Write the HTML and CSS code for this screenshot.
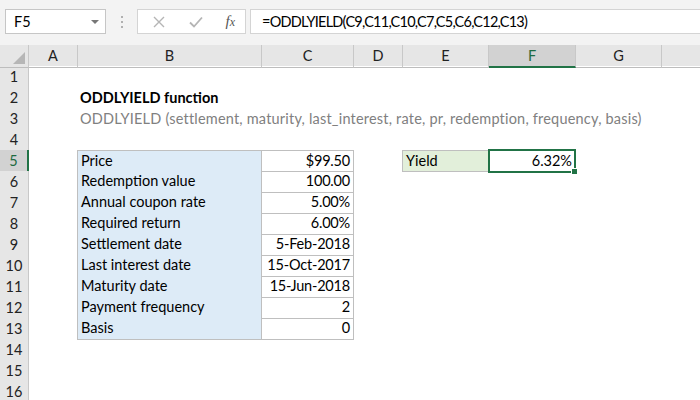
FILE: index.html
```html
<!DOCTYPE html>
<html>
<head>
<meta charset="utf-8">
<link rel="stylesheet" href="styles.css">
</head>
<body>
<div class="app">
  <div class="topbar">
    <div class="namebox"><span>F5</span><span class="caret"></span></div>
    <div class="dots"><i></i><i></i><i></i></div>
    <div class="btns">
      <svg class="ic" width="14" height="14" viewBox="0 0 14 14"><path d="M2 2L12 12M12 2L2 12" stroke="#b5b5b5" stroke-width="1.4" fill="none"/></svg>
      <svg class="ic" width="16" height="14" viewBox="0 0 16 14"><path d="M2 7.5L6 11.5L14 2.5" stroke="#b5b5b5" stroke-width="1.8" fill="none"/></svg>
      <span class="fx"><i>f</i><i class="x">x</i></span>
    </div>
    <div class="formula">=ODDLYIELD(C9,C11,C10,C7,C5,C6,C12,C13)</div>
  </div>
  <div class="sheet">
    <div class="row hdr">
      <div class="corner"><span class="tri"></span></div>
      <div class="ch">A</div><div class="ch">B</div><div class="ch">C</div><div class="ch">D</div>
      <div class="ch">E</div><div class="ch sel">F</div><div class="ch">G</div><div class="ch last"></div>
    </div>
    <div class="row"><div class="rh">1</div></div>
    <div class="row"><div class="rh">2</div><div class="c-b title">ODDLYIELD function</div></div>
    <div class="row"><div class="rh">3</div><div class="c-b syntax">ODDLYIELD (settlement, maturity, last_interest, rate, pr, redemption, frequency, basis)</div></div>
    <div class="row"><div class="rh">4</div></div>
    <div class="row"><div class="rh sel">5</div><div class="c-b lbl top">Price</div><div class="c-c val top">$99.50</div><div class="c-e yl">Yield</div><div class="c-f res">6.32%<span class="handle"></span></div></div>
    <div class="row"><div class="rh">6</div><div class="c-b lbl">Redemption value</div><div class="c-c val">100.00</div></div>
    <div class="row"><div class="rh">7</div><div class="c-b lbl">Annual coupon rate</div><div class="c-c val">5.00%</div></div>
    <div class="row"><div class="rh">8</div><div class="c-b lbl">Required return</div><div class="c-c val">6.00%</div></div>
    <div class="row"><div class="rh">9</div><div class="c-b lbl">Settlement date</div><div class="c-c val">5-Feb-2018</div></div>
    <div class="row"><div class="rh">10</div><div class="c-b lbl">Last interest date</div><div class="c-c val">15-Oct-2017</div></div>
    <div class="row"><div class="rh">11</div><div class="c-b lbl">Maturity date</div><div class="c-c val">15-Jun-2018</div></div>
    <div class="row"><div class="rh">12</div><div class="c-b lbl">Payment frequency</div><div class="c-c val">2</div></div>
    <div class="row"><div class="rh">13</div><div class="c-b lbl">Basis</div><div class="c-c val">0</div></div>
    <div class="row"><div class="rh">14</div></div>
    <div class="row"><div class="rh">15</div></div>
    <div class="row"><div class="rh">16</div></div>
  </div>
</div>
</body>
</html>
```
FILE: styles.css
```css
html, body { margin: 0; padding: 0; }
body { width: 700px; height: 400px; overflow: hidden; background: #fff;
  font-family: Lato, "Open Sans", sans-serif; font-size: 14.5px; color: #000; }
.app { width: 700px; height: 400px; overflow: hidden; }
.topbar { height: 45px; background: #f3f3f3; display: flex; align-items: flex-start;
  padding: 9px 0 0 5px; box-sizing: border-box; }
.namebox { width: 101px; height: 25px; box-sizing: border-box; background: #fff;
  border: 1px solid #c6c6c6; display: flex; align-items: center; justify-content: space-between;
  padding: 0 6px 0 8px; font-size: 14.5px; }
.caret { width: 0; height: 0; border-left: 4px solid transparent; border-right: 4px solid transparent;
  border-top: 4px solid #777; }
.dots { width: 31px; height: 25px; display: flex; flex-direction: column; align-items: center;
  justify-content: center; gap: 3px; }
.dots i { width: 2px; height: 2px; background: #b0b0b0; display: block; }
.btns { width: 109px; height: 25px; box-sizing: border-box; background: #fff; border: 1px solid #d4d4d4;
  display: flex; align-items: center; justify-content: space-between; padding: 0 10px 0 14px; }
.fx { font-family: "Liberation Serif", serif; font-style: italic; color: #555; font-size: 15px; }
.fx .x { font-size: 12px; }
.formula { margin-left: 4px; flex: 1; height: 25px; box-sizing: border-box; background: #fff;
  border: 1px solid #d4d4d4; border-right: none; padding-left: 11px; line-height: 23px; font-size: 14.5px;
  letter-spacing: -0.75px; }
.row { display: grid; grid-template-columns: 29px 49px 184px 92px 49px 86px 87px 86px 38px;
  height: 21px; }
.hdr { height: 21px; background: #e6e6e6; }
.corner { border-right: 1px solid #c8c8c8; border-bottom: 1px solid #bdbdbd; position: relative; }
.tri { position: absolute; right: 3px; bottom: 3px; width: 0; height: 0;
  border-left: 12px solid transparent; border-bottom: 12px solid #b6b6b6; }
.ch { border-right: 1px solid #c8c8c8; border-bottom: 1px solid #bdbdbd; text-align: center;
  line-height: 21px; font-size: 14.5px; color: #222; box-sizing: border-box; }
.ch.sel { background: #d2d2d2; border-bottom: 2px solid #217346; color: #1e6b41; }
.ch.last { border-right: none; }
.rh { grid-column: 1; background: #e6e6e6; border-right: 1px solid #c8c8c8; border-bottom: 1px solid #d0d0d0;
  text-align: center; line-height: 21px; box-sizing: border-box; color: #222; }
.rh.sel { background: #d2d2d2; border-right: 2px solid #217346; color: #1e6b41; }
.c-b { grid-column: 3; }
.c-c { grid-column: 4; }
.c-e { grid-column: 6; }
.c-f { grid-column: 7; }
.title { font-weight: bold; white-space: nowrap; line-height: 21px; padding-left: 2px; }
.syntax { white-space: nowrap; line-height: 21px; color: #808080; padding-left: 2px; letter-spacing: 0.2px; }
.lbl { background: #ddebf7; border-left: 1px solid #bfbfbf; border-bottom: 1px solid #bfbfbf;
  border-right: 1px solid #bfbfbf; margin-left: -1px; padding-left: 3px; line-height: 20px; }
.val { border-bottom: 1px solid #bfbfbf; border-right: 1px solid #bfbfbf; text-align: right;
  padding-right: 3px; line-height: 20px; letter-spacing: -0.2px; }
.top { border-top: 1px solid #bfbfbf; line-height: 19px; }
.yl { background: #e2efda; border: 1px solid #bfbfbf; margin-left: -1px; padding-left: 3px; line-height: 19px; }
.res { border: 2px solid #217346; margin-left: -1px; margin-top: -1px; margin-bottom: -1px; text-align: right;
  padding-right: 2px; line-height: 19px; position: relative; }
.handle { position: absolute; right: -4px; bottom: -4px; width: 5px; height: 5px; background: #217346;
  border: 1px solid #fff; }
```
